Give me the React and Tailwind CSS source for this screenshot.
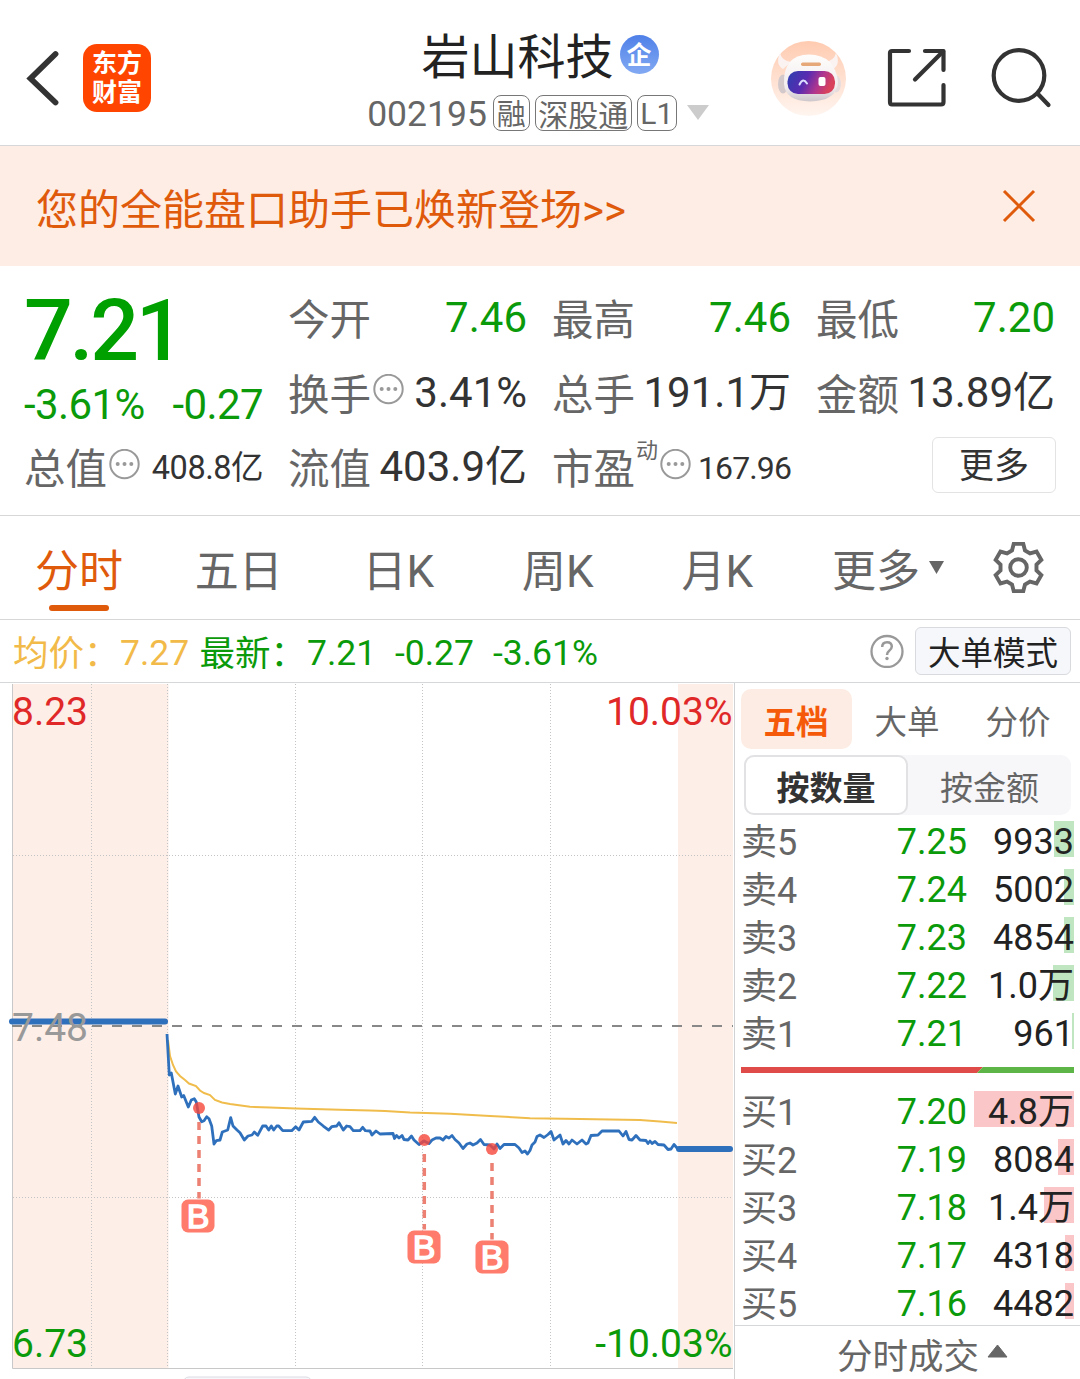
const STATS = [
  [
    { label: '今开', value: '7.46', green: true },
    { label: '换手', value: '3.41%', more: true },
    { label: '流值', value: '403.9亿' },
  ],
  [
    { label: '最高', value: '7.46', green: true },
    { label: '总手', value: '191.1万' },
    { label: '市盈', value: '167.96', more: true, sup: '动', size: 'pt-0.5 text-[32px] tracking-[-0.9px]' },
  ],
  [
    { label: '最低', value: '7.20', green: true },
    { label: '金额', value: '13.89亿' },
  ],
]

const TABS = ['分时', '五日', '日K', '周K', '月K']

const SELL = [
  { label: '卖5', price: '7.25', vol: '9933', bar: 20 },
  { label: '卖4', price: '7.24', vol: '5002', bar: 10 },
  { label: '卖3', price: '7.23', vol: '4854', bar: 10 },
  { label: '卖2', price: '7.22', vol: '1.0万', bar: 21 },
  { label: '卖1', price: '7.21', vol: '961', bar: 2 },
]

const BUY = [
  { label: '买1', price: '7.20', vol: '4.8万', bar: 100 },
  { label: '买2', price: '7.19', vol: '8084', bar: 16 },
  { label: '买3', price: '7.18', vol: '1.4万', bar: 30 },
  { label: '买4', price: '7.17', vol: '4318', bar: 9 },
  { label: '买5', price: '7.16', vol: '4482', bar: 9 },
]

const PRICE_LINE =
  '167,1034 169.3,1075 171.3,1073 175.3,1094 178,1086 181.7,1097 183.7,1095.5 188.3,1107 191.3,1100 194.3,1098.7 196.3,1102 199,1117 201.7,1121.7 204,1120.7 206.7,1116.7 209,1118.7 211.7,1126 214,1144 216.3,1140.7 220,1140 222.3,1132 227.7,1130 230.7,1117.7 233,1126 237,1130 240,1132.7 244.3,1140 248,1136 252,1135 254.3,1132 257.7,1135.3 262.7,1126 266,1126 268.7,1130 271.3,1126 273.7,1130 276.7,1126 278.7,1126 282.7,1130.7 291.7,1130.7 295.7,1126.7 299,1130 303.3,1122 311.7,1121.3 314.7,1117.3 318.3,1122 323.3,1126 328.7,1130 331.7,1126.7 336.7,1126 339,1122.7 343.3,1130 346.7,1126 350,1126.7 353.3,1130.7 360,1130.7 362.7,1127.3 365.3,1130.7 370,1131 372,1135 376,1131 380,1134 393,1133.5 394.5,1138.5 396.5,1135.5 399,1138 402,1135.5 404,1139.5 408,1140 411.5,1136 414,1140 419,1144.5 424,1141 429,1143.5 432,1140 436,1138 440,1138 443,1140 446,1136.5 449,1138 452,1135.5 455,1139.5 459,1143 463,1148.5 467,1144 470,1143 473,1145 477,1143 480.5,1139.5 484,1144.5 490,1145 494,1149 497,1144 500,1148.5 504,1144.5 515,1144.5 519,1148 522,1152.5 525,1151 527.5,1154 530,1150.5 532,1145 535,1142 537,1136.5 540,1135 544,1137.5 548,1134.5 551,1131.5 554,1140 560,1135 563,1144 566,1140.5 569,1144 572,1140 577,1144 582,1140 586,1144 588,1143 591,1135.5 598,1135 602,1131 619,1131 623,1136 626,1131.5 629,1139.5 632,1140 636,1135.5 640,1140 646,1140.5 648,1143.5 650,1141 652,1143.5 655,1141.5 658,1144.5 664,1145 668,1149.5 671,1149 674,1144.5 677,1148 680,1149'

const AVG_LINE =
  '168,1040 170,1056 173,1065 176,1071.5 180,1076 185,1080 189,1083.5 196,1086 200,1090.5 204,1093 210,1095 215,1100 222,1102.5 230,1104 250,1106.7 270,1107.6 296,1108.5 340,1109.7 370,1110.5 385,1111 410,1112.5 450,1113.8 490,1116 530,1118.2 580,1119 640,1120 660,1121.5 677,1123'

const MARKS = [
  { x: 199, y: 1108, box: 181.5, boxY: 1199.5 },
  { x: 424.3, y: 1140, box: 407.5, boxY: 1230.5 },
  { x: 492, y: 1149, box: 475.5, boxY: 1240.5 },
]

function BackIcon() {
  return (
    <svg width="34" height="56" viewBox="0 0 34 56" fill="none" stroke="#333" strokeWidth="5.8" strokeLinecap="round">
      <path d="M30.500 4 L5.500 28.500 L30.500 52.500" strokeLinejoin="miter" />
    </svg>
  )
}

function RobotAvatar() {
  return (
    <svg width="76" height="76" viewBox="0 0 76 76">
      <defs>
        <linearGradient id="avatarBg" x1="0" y1="0" x2="0" y2="1">
          <stop offset="0" stopColor="#ffcbb0" />
          <stop offset="1" stopColor="#fff5f0" />
        </linearGradient>
        <linearGradient id="visor" x1="0" y1="0" x2="1" y2="0.25">
          <stop offset="0" stopColor="#2b3fb0" />
          <stop offset="0.45" stopColor="#5a2bb0" />
          <stop offset="0.75" stopColor="#b0368e" />
          <stop offset="1" stopColor="#d8425c" />
        </linearGradient>
        <linearGradient id="helmet" x1="0" y1="0" x2="0" y2="1">
          <stop offset="0" stopColor="#fffdfc" />
          <stop offset="0.7" stopColor="#f1ecee" />
          <stop offset="1" stopColor="#cdc6cb" />
        </linearGradient>
      </defs>
      <circle cx="37.500" cy="38.500" r="37.500" fill="url(#avatarBg)" />
      <path d="M9 13 Q4 24 12 29 L20 22 Q11 21 9 13Z" fill="#fbf3f1" />
      <path d="M65 13 Q70 24 62 29 L54 22 Q63 21 65 13Z" fill="#fbf3f1" />
      <ellipse cx="12" cy="44" rx="5" ry="9.500" fill="#d3c9cb" />
      <ellipse cx="65" cy="44" rx="5" ry="8.500" fill="#e6dddf" />
      <path d="M13 44 Q12 15 38 14.500 Q64 15 67 42 Q66 61 39 61.500 Q14 61 13 44Z" fill="url(#helmet)" />
      <rect x="30" y="22.500" width="20" height="3.500" rx="1.700" fill="#e6a878" />
      <rect x="16.500" y="31" width="47.500" height="23" rx="10.500" fill="url(#visor)" />
      <path d="M28.500 44.500 Q32 37 36 43.500" fill="none" stroke="#dcdcff" strokeWidth="2" strokeLinecap="round" />
      <rect x="47.500" y="37" width="7" height="9" rx="2" fill="#fff" />
    </svg>
  )
}

function ShareIcon() {
  return (
    <svg width="60" height="60" viewBox="0 0 60 60" fill="none" stroke="#333" strokeWidth="4.200" strokeLinecap="round" strokeLinejoin="round">
      <path d="M22 3 H5 Q3 3 3 5 V54 Q3 56.500 5 56.500 H54 Q56.500 56.500 56.500 54 V37" />
      <path d="M38 3 H56.500 V22" />
      <path d="M56 3.500 L28 31.500" />
    </svg>
  )
}

function SearchIcon() {
  return (
    <svg width="62" height="62" viewBox="0 0 62 62" fill="none" stroke="#333" strokeWidth="4.200" strokeLinecap="round">
      <circle cx="29" cy="28.500" r="25.300" />
      <path d="M47.500 46.500 L58.500 58" />
    </svg>
  )
}

function MoreDots() {
  return (
    <svg className="shrink-0" width="31" height="31" viewBox="0 0 31 31">
      <circle cx="15.500" cy="15" r="14.200" fill="none" stroke="#999" strokeWidth="2" />
      <circle cx="8.700" cy="15" r="2" fill="#999" />
      <circle cx="15.500" cy="15" r="2" fill="#999" />
      <circle cx="22.300" cy="15" r="2" fill="#999" />
    </svg>
  )
}

function GearIcon() {
  const pts = []
  for (let i = 0; i < 6; i++) {
    const a = (i * Math.PI) / 3
    for (const [x, y] of [[-6.5, -17], [-4.8, -23.6], [4.8, -23.6], [6.5, -17]]) {
      pts.push(`${x * Math.cos(a) - y * Math.sin(a)},${x * Math.sin(a) + y * Math.cos(a)}`)
    }
  }
  return (
    <svg width="54" height="54" viewBox="-27.5 -27.5 54 54" fill="none" stroke="#666" strokeWidth="3.900">
      <polygon points={pts.join(' ')} />
      <circle r="8.300" />
    </svg>
  )
}

function Header() {
  return (
    <header className="flex h-[146px] items-center border-b border-[#d5d7d9]">
      <div className="flex w-[360px] items-center pt-2.5 pl-[25px]">
        <BackIcon />
        <div className="ml-6 flex h-[68px] w-[68px] flex-col items-center justify-center rounded-[14px] bg-[#ff4500] text-[25px] leading-[29px] font-bold text-white">
          <span>东方</span>
          <span>财富</span>
        </div>
      </div>
      <div className="flex w-[360px] flex-col items-center pt-3">
        <div className="flex h-[68px] items-center">
          <h1 className="pt-1.5 text-[48px] leading-[60px] text-[#222]">岩山科技</h1>
          <span className="ml-1.5 flex h-[39px] w-[39px] items-center justify-center rounded-full bg-linear-to-b from-[#4f80e8] to-[#82a9f2] pt-0.5 text-[25px] leading-none font-bold text-white">
            企
          </span>
        </div>
        <div className="flex h-[48px] items-center pr-1 text-[#666]">
          <span className="mr-1.5 pt-0.5 text-[35.500px] leading-[44px]">002195</span>
          <span className="mr-[5px] flex h-9 w-[37px] items-center justify-center rounded-lg border border-[#777] pt-1.5 text-[29px] leading-none">融</span>
          <span className="mr-[5px] flex h-9 w-[97px] items-center justify-center rounded-lg border border-[#777] pt-1.5 text-[30px] leading-none">深股通</span>
          <span className="flex h-9 w-10 items-center justify-center rounded-lg border border-[#777] pt-0.5 text-[30px] leading-none">L1</span>
          <svg className="ml-2.5" width="22" height="15" viewBox="0 0 22 15">
            <path d="M0 0 H22 L11 15Z" fill="#ccc" />
          </svg>
        </div>
      </div>
      <div className="flex flex-1 items-center justify-end pt-2.5 pr-[28px]">
        <RobotAvatar />
        <div className="ml-10"><ShareIcon /></div>
        <div className="ml-[43px]"><SearchIcon /></div>
      </div>
    </header>
  )
}

function Banner() {
  return (
    <div className="flex h-[120px] items-center justify-between bg-[#fdede5] pr-11 pl-9 text-[#e05a0c]">
      <p className="pt-2.5 text-[42px] leading-[60px]">您的全能盘口助手已焕新登场&gt;&gt;</p>
      <svg width="34" height="34" viewBox="0 0 34 34" fill="none" stroke="#e05a0c" strokeWidth="3">
        <path d="M2 2 L32 32 M32 2 L2 32" />
      </svg>
    </div>
  )
}

function Stat({ item }) {
  return (
    <div className="flex h-[74.500px] items-center justify-between">
      <div className="flex items-center text-[41.500px] text-[#666]">
        <span className="pt-1.5">{item.label}</span>
        {item.sup && <span className="-mt-[33px] ml-px text-[22px] leading-none">{item.sup}</span>}
        {item.more && <div className="-mt-1.5 ml-0.5"><MoreDots /></div>}
      </div>
      <span className={`${item.size || 'text-[42px]'} ${item.green ? 'text-[#0a9a0a]' : 'text-[#333]'}`}>
        {item.value}
      </span>
    </div>
  )
}

function Quote() {
  return (
    <section className="grid h-[250px] grid-cols-4 gap-[25px] border-b border-[#d5d7d9] pt-[15px] pr-[25px] pl-6 leading-[60px] whitespace-nowrap">
      <div>
        <div className="h-[96px] text-[86px] leading-[100px] font-medium tracking-[-3.3px] text-[#00a000]">7.21</div>
        <div className="flex h-[53px] items-center justify-between pt-[3px] text-[42px] text-[#0a9a0a]">
          <span className="tracking-[-0.6px]">-3.61%</span>
          <span className="tracking-[-0.6px]">-0.27</span>
        </div>
        <Stat item={{ label: '总值', value: '408.8亿', more: true, size: 'pt-0.5 text-[32.500px] tracking-[-0.5px]' }} />
      </div>
      {STATS.map((col, i) => (
        <div key={i}>
          {col.map((item) => (
            <Stat key={item.label} item={item} />
          ))}
          {i === 2 && (
            <div className="-mr-px flex h-[70px] items-center justify-end">
              <button className="h-14 w-[124px] rounded-md border-[1.500px] border-[#e3e3e3] text-[35px] leading-[58px] text-[#333]">更多</button>
            </div>
          )}
        </div>
      ))}
    </section>
  )
}

function Tabs() {
  return (
    <nav className="flex h-[104px] border-b border-[#d5d7d9] text-[44px] leading-[60px] text-[#666]">
      {TABS.map((tab, i) => (
        <div key={tab} className="flex w-[159.600px] flex-col items-center pt-[26px] pr-[1.500px]">
          <span className={i === 0 ? 'text-[#e05a0c]' : ''}>{tab}</span>
          {i === 0 && <span className="mt-[3px] h-1.5 w-[60px] rounded-full bg-[#e05a0c]" />}
        </div>
      ))}
      <div className="flex items-start pt-[26px] pl-[34px]">
        <span>更多</span>
        <svg className="mt-[19px] ml-[9px]" width="15" height="13" viewBox="0 0 15 13">
          <path d="M0 0 H15 L7.500 13Z" fill="#666" />
        </svg>
      </div>
      <div className="mt-6 ml-[47px]"><GearIcon /></div>
    </nav>
  )
}

function InfoBar() {
  return (
    <div className="flex h-[63px] items-center justify-between border-b border-[#d5d7d9] pr-[9px] pl-[13px] text-[35.500px] leading-[60px] text-[#0a9a0a]">
      <div className="flex pt-1 whitespace-pre">
        <span className="w-[107px] pt-px text-[#f2ba48]">均价：</span>
        <span className="w-[79.500px] text-[#f2ba48]">7.27</span>
        <span className="w-[107.500px] pt-px">最新：</span>
        <span className="w-[88px]">7.21</span>
        <span className="w-[98px]">-0.27</span>
        <span>-3.61%</span>
      </div>
      <div className="flex items-center">
        <svg width="34" height="34" viewBox="0 0 34 34">
          <circle cx="17" cy="17.500" r="15.500" fill="none" stroke="#999" strokeWidth="2.300" />
          <path d="M12.200 13 Q12.200 8.200 17 8.200 Q21.800 8.200 21.800 12.600 Q21.800 15 19 17 Q17 18.500 17 21" fill="none" stroke="#999" strokeWidth="2.500" />
          <circle cx="17" cy="24.500" r="1.700" fill="#999" />
        </svg>
        <button className="ml-[11px] h-12 w-[156px] rounded-md border border-[#d8dade] bg-[#f6f7fa] pt-0.5 text-[32.500px] leading-[48px] text-[#222]">大单模式</button>
      </div>
    </div>
  )
}

function Chart() {
  return (
    <svg className="block shrink-0" width="734" height="696" viewBox="0 683 734 696" fontSize="39">
      <rect x="12" y="684" width="156.500" height="684" fill="#fdeee7" />
      <rect x="678" y="684" width="55" height="684" fill="#fdeee7" />
      <g stroke="#c4c4c4" strokeWidth="1" strokeDasharray="1 2">
        {[91.5, 167.5, 295.5, 422.5, 550.5].map((x) => (
          <path key={x} d={`M${x} 684 V1368`} />
        ))}
        <path d="M13 855.500 H733" />
        <path d="M13 1197.500 H733" />
      </g>
      <path d="M12.500 684 V1368.500 H733" fill="none" stroke="#c8c8c8" />
      <path d="M12 1026 H733" stroke="#888" strokeWidth="2" strokeDasharray="10 10" />
      <path d="M12 1021.500 H165" stroke="#2f70bd" strokeWidth="6" strokeLinecap="round" />
      <polyline points={AVG_LINE} fill="none" stroke="#f0bd4c" strokeWidth="2" />
      <polyline points={PRICE_LINE} fill="none" stroke="#2f70bd" strokeWidth="2.800" strokeLinejoin="round" />
      <path d="M679 1149 H730" stroke="#2f70bd" strokeWidth="6" strokeLinecap="round" />
      {MARKS.map((m) => (
        <g key={m.x}>
          <circle cx={m.x} cy={m.y} r="6" fill="#f5463a" fillOpacity="0.8" />
          <path d={`M${m.x} ${m.y + 14} V${m.boxY - 1}`} stroke="#ec8073" strokeWidth="3.500" strokeDasharray="8 6" />
          <rect x={m.box} y={m.boxY} width="33" height="33" rx="6.500" fill="#ff7b6c" />
          <text x={m.box + 16.7} y={m.boxY + 28.500} fontSize="34" fontFamily="Liberation Sans" stroke="#fff" strokeWidth="1.500" textAnchor="middle" fill="#fff">B</text>
        </g>
      ))}
      <text x="12" y="725" fill="#e02828">8.23</text>
      <text x="732.500" y="725" textAnchor="end" fill="#e02828">10.03%</text>
      <text x="12" y="1041" fill="#999">7.48</text>
      <text x="12" y="1357" fill="#0a9a0a">6.73</text>
      <text x="732.500" y="1357" textAnchor="end" fill="#0a9a0a">-10.03%</text>
      <rect x="183" y="1377" width="129" height="12" rx="6" fill="#f6f7fa" stroke="#dcdce4" />
    </svg>
  )
}

function BookRow({ row, barColor }) {
  return (
    <div className="flex h-12 items-center text-[36px]">
      <span className="w-[110px] pt-[7px] text-[#666]">{row.label}</span>
      <span className="w-[116px] pt-1.5 text-right text-[#0a9a0a]">{row.price}</span>
      <div className="relative ml-1.5 flex h-9 flex-1 items-center justify-end text-[#222]">
        <div className={`absolute top-0 right-0 h-9 ${barColor}`} style={{ width: row.bar }} />
        <span className="relative pt-1.5">{row.vol}</span>
      </div>
    </div>
  )
}

function OrderBook() {
  return (
    <aside className="flex flex-1 flex-col border-l border-[#d0d2d4] leading-[48px]">
      <div className="mt-1.5 flex h-[60px] pl-1.5 text-[32.500px] leading-[68px] text-[#666]">
        <div className="w-[111px] rounded-[10px] bg-[#fdece3] pr-px text-center font-bold text-[#f5590a]">五档</div>
        <div className="w-[110px] text-center">大单</div>
        <div className="w-[112px] text-center">分价</div>
      </div>
      <div className="mt-1.5 mr-[9px] ml-[9px] flex h-[60px] rounded-[10px] bg-[#f7f7fa] text-[33px] text-[#666]">
        <div className="w-[164px] rounded-[10px] border-2 border-[#e2e2e4] bg-white text-center leading-[63px] font-bold text-[#333]">按数量</div>
        <div className="flex-1 text-center leading-[67px]">按金额</div>
      </div>
      <div className="pr-1.5 pl-1.5">
        {SELL.map((row) => (
          <BookRow key={row.label} row={row} barColor="bg-[#bfe6c1]" />
        ))}
        <svg className="mt-3 block" width="333" height="6" viewBox="0 0 333 6">
          <path d="M0 0 H242 L236 6 H0Z" fill="#df4b49" />
          <path d="M242 0 H333 V6 H236Z" fill="#5cb546" />
        </svg>
        <div className="mt-3">
          {BUY.map((row) => (
            <BookRow key={row.label} row={row} barColor="bg-[#fbc6c8]" />
          ))}
        </div>
      </div>
      <div className="flex flex-1 items-start justify-center border-t border-[#d5d7d9] pt-[7px] pl-[30px] text-[35.500px] text-[#666]">
        <span>分时成交</span>
        <svg className="mt-[11px] ml-2" width="21" height="14" viewBox="0 0 21 14">
          <path d="M10.500 1 L20 13 H1Z" fill="#666" stroke="#666" strokeLinejoin="round" />
        </svg>
      </div>
    </aside>
  )
}

export default function App() {
  return (
    <div className="h-[1379px] w-[1080px] overflow-hidden bg-white font-[Roboto,'Noto_Sans_CJK_SC',sans-serif]">
      <Header />
      <Banner />
      <Quote />
      <Tabs />
      <InfoBar />
      <main className="flex h-[696px]">
        <Chart />
        <OrderBook />
      </main>
    </div>
  )
}
